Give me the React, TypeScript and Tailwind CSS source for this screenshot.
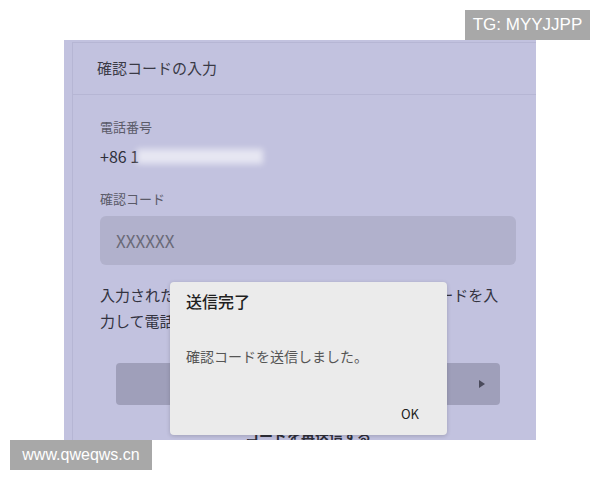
import React from "react";

const jp = { fontFamily: '"Noto Sans CJK JP", "Noto Sans", sans-serif' };

export default function App() {
  return (
    <div className="relative w-[600px] h-[480px] bg-white overflow-hidden" style={jp}>
      {/* ページ本体 */}
      <div className="mt-10 ml-16 w-[472px] h-[400px] overflow-hidden bg-[#c2c2df] pl-2 pt-[2px]">
        <div className="h-full border-l border-t border-[#b6b6d4]">
          <div className="h-[52px] flex items-center pl-[24px] border-b border-[#b6b6d4] text-[15px] text-[#3a3a46]">
            確認コードの入力
          </div>
          <div className="pl-[27px] pr-[20px] pt-[22px]">
            <div className="text-[13px] leading-5 text-[#5a5a68]">電話番号</div>
            <div className="mt-[7px] h-6 flex items-center text-[16px] text-[#2f2f3a]">
              <span>+86 1</span>
              <span className="ml-[-2px] inline-block w-[126px] h-[15px] bg-white/60 blur-[3px]" />
            </div>
            <div className="mt-[21px] text-[13px] leading-5 text-[#5a5a68]">確認コード</div>
            <div className="mt-[7px] h-[49px] rounded-md bg-[#b1b1cc] flex items-center pl-[16px] text-[17px] text-[#6a6a78]">
              XXXXXX
            </div>
            <p className="mt-[17px] text-[15px] leading-[26px] text-[#33333f] whitespace-nowrap">
              入力された電話番号宛てに送信された6桁の確認コードを入
              <br />
              力して電話番号の認証を完了してください。
            </p>
            <div className="mt-[29px] mx-4 h-[42px] rounded bg-[#9f9fba] flex items-center justify-end pr-[14px]">
              <svg width="8" height="10" viewBox="0 0 8 10">
                <path d="M1 1 L7 5 L1 9 Z" fill="#4a4a5c" />
              </svg>
            </div>
            <div className="mt-[20px] text-center text-[14px] leading-5 font-bold text-[#2f2f3a]">
              コードを再送信する
            </div>
          </div>
        </div>
      </div>

      {/* ダイアログ */}
      <div className="absolute left-[170px] top-[282px] w-[277px] h-[153px] rounded bg-[#ebebeb] shadow-[0_1px_4px_rgba(0,0,0,0.18)] flex flex-col">
        <div className="pl-[16px] pt-[9px] text-[16px] leading-5 font-medium text-[#1f1f1f]">送信完了</div>
        <div className="pl-[16px] mt-[35px] text-[14px] leading-5 text-[#555]">確認コードを送信しました。</div>
        <div className="mt-auto mb-[11px] flex justify-end pr-[28px] text-[13px] leading-5 text-[#222]">OK</div>
      </div>

      {/* 透かし */}
      <div className="absolute right-[10px] top-[10px] h-[30px] w-[125px] bg-[#a8a8a8] flex items-center justify-center text-[17px] text-white" style={{ fontFamily: '"Liberation Sans", Arial, sans-serif' }}>
        TG: MYYJJPP
      </div>
      <div className="absolute left-[10px] top-[440px] h-[30px] w-[142px] bg-[#a8a8a8] flex items-center justify-center text-[16px] text-white" style={{ fontFamily: '"Liberation Sans", Arial, sans-serif' }}>
        www.qweqws.cn
      </div>
    </div>
  );
}
